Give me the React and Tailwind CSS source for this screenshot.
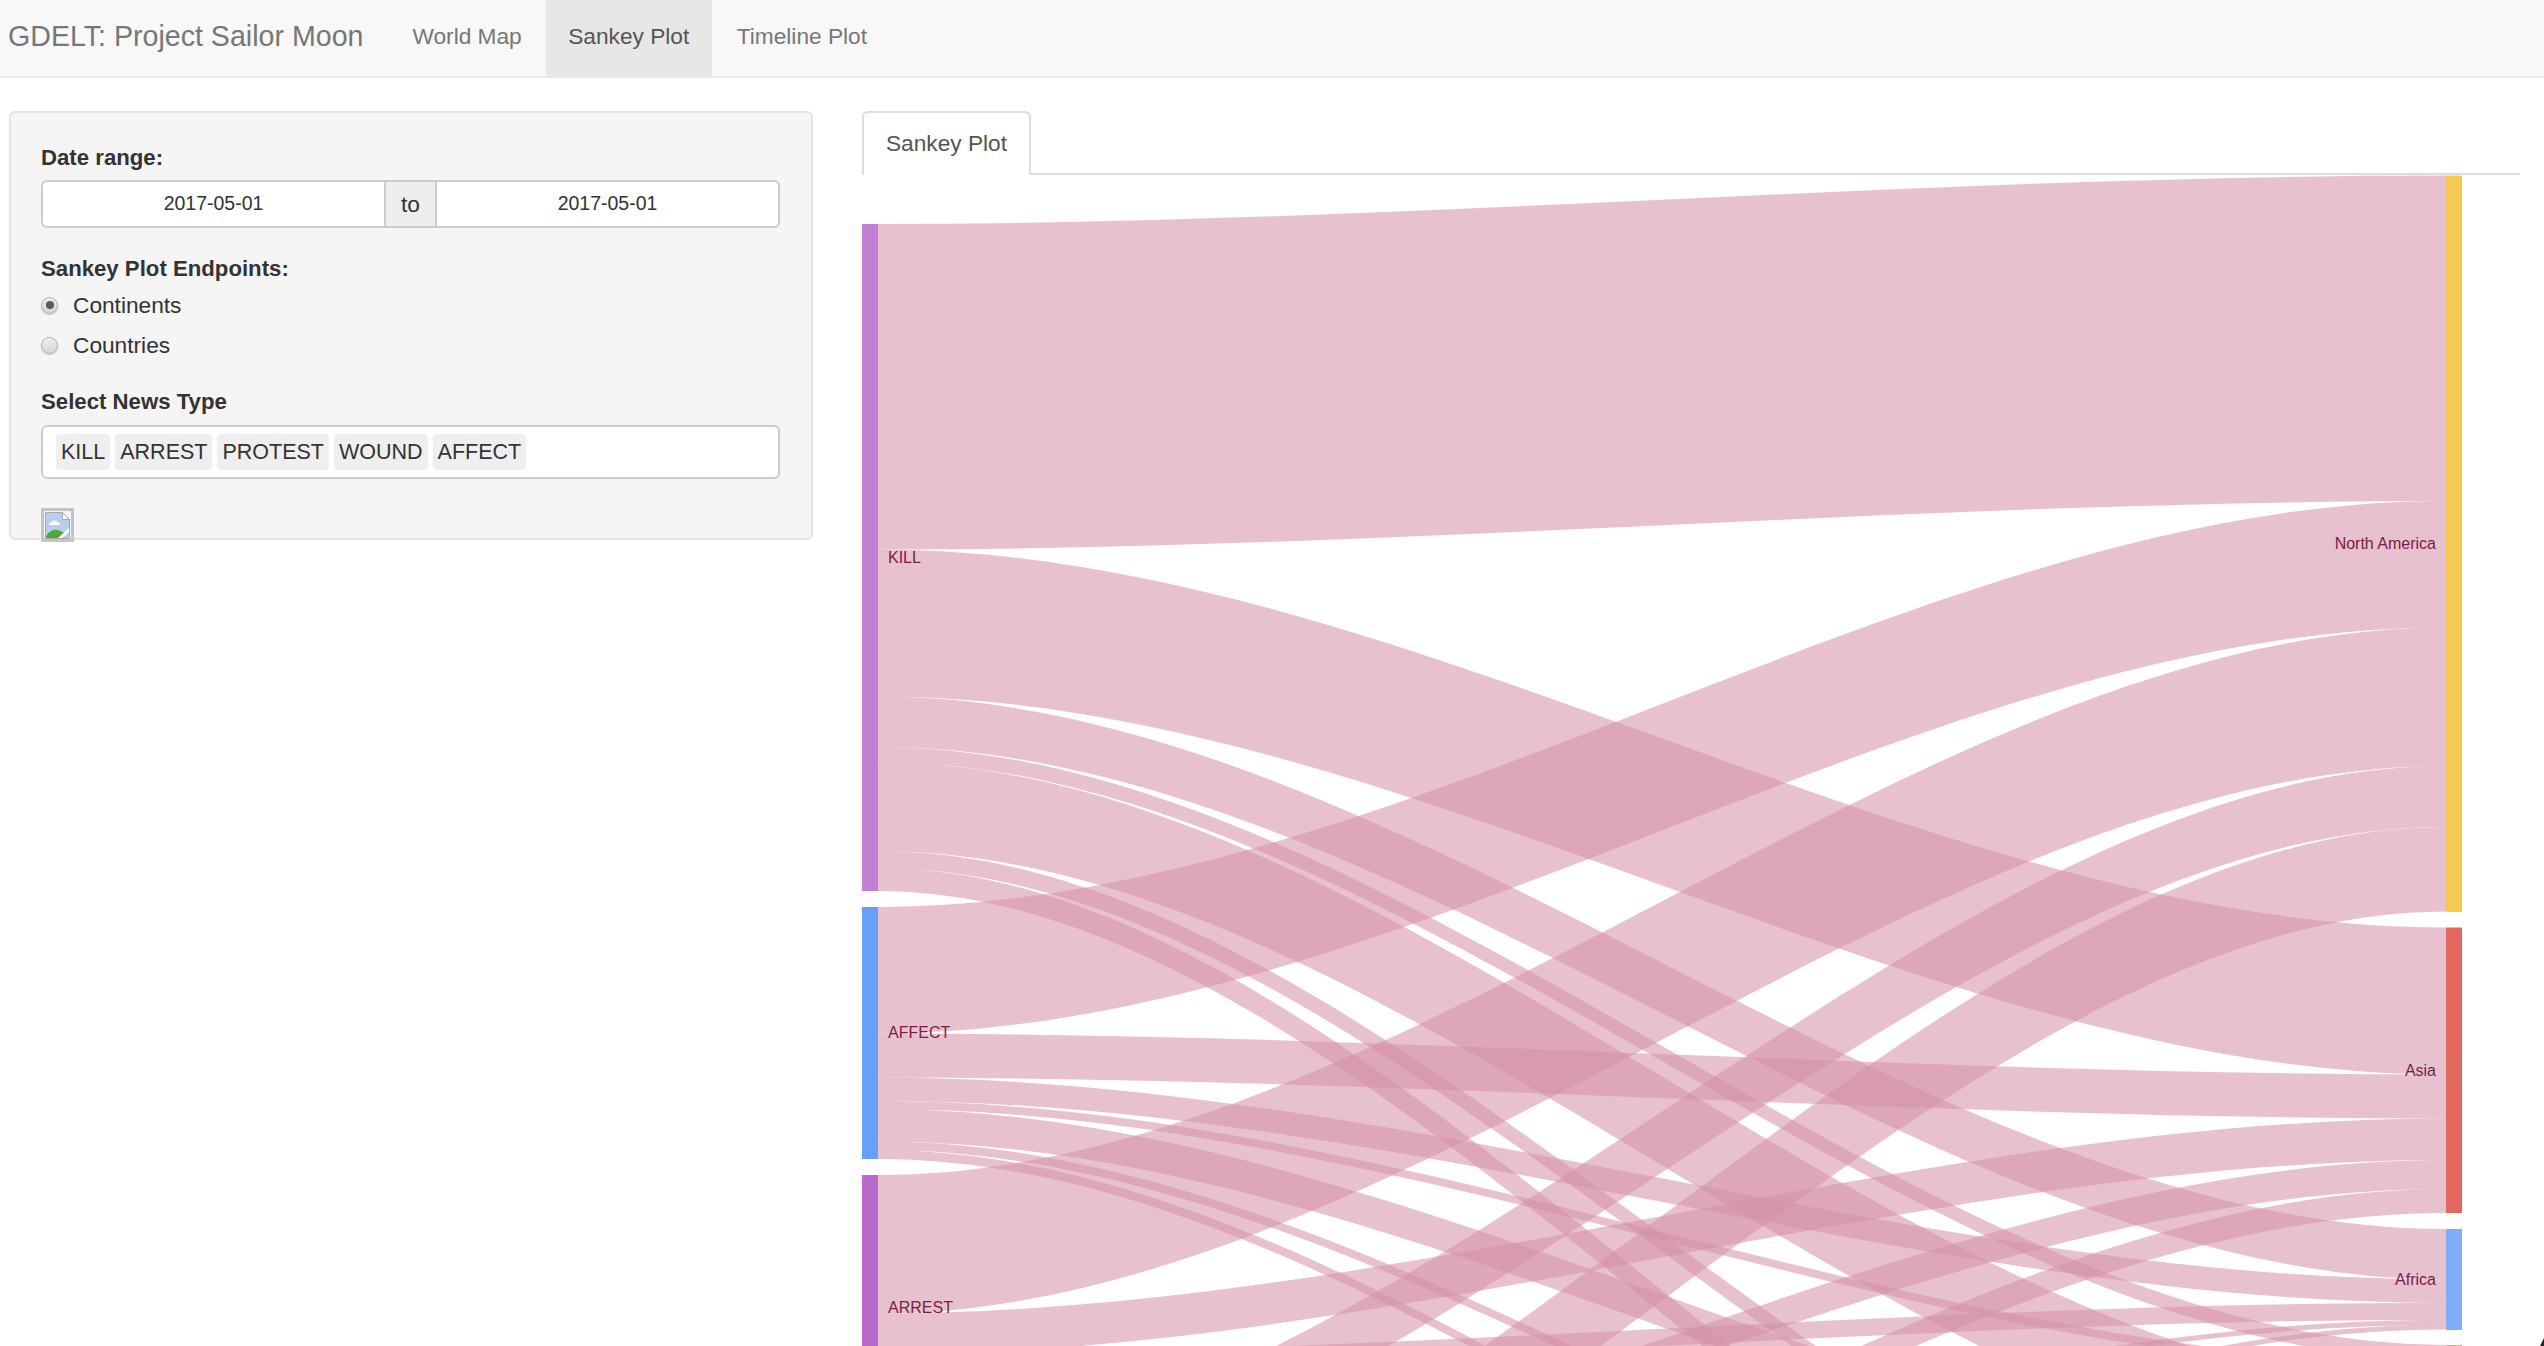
const sourceNodes = [
  { name: 'KILL', y0: 224, y1: 891, color: '#c280d4', labelY: 557 },
  { name: 'AFFECT', y0: 907, y1: 1159, color: '#689ff9', labelY: 1032 },
  { name: 'ARREST', y0: 1175, y1: 1430, color: '#b96bca', labelY: 1307 },
]

const targetNodes = [
  { name: 'North America', y0: 175.5, y1: 912, color: '#f5c952', labelY: 543 },
  { name: 'Asia', y0: 927.5, y1: 1213, color: '#e0685f', labelY: 1070 },
  { name: 'Africa', y0: 1229, y1: 1330, color: '#80acfa', labelY: 1279 },
  { name: '', y0: 1345, y1: 1400, color: '#e8a08f', labelY: 1400 },
]

// [source top, target top, thickness]
const links = [
  // KILL
  [224, 175.5, 325.5],
  [549.5, 927.5, 147],
  [696.5, 1229, 50.5],
  [747, 1345, 15],
  [762, 1391, 89],
  [851, 1618, 17],
  [868, 1713, 23],
  // AFFECT
  [907, 501, 126.5],
  [1033.5, 1074.5, 44],
  [1077.5, 1279.5, 23.4],
  [1101, 1363, 8],
  [1109, 1480, 32.5],
  [1141.5, 1635, 8.5],
  [1150, 1736, 9],
  // ARREST
  [1175, 627.5, 138.5],
  [1313.5, 1118.5, 41.5],
  [1355, 1302.7, 17],
  // the two sources below the fold
  [1457, 766, 61],
  [1518, 1160, 29],
  [1547, 1319.7, 5],
  [1605, 827, 84.5],
  [1689.5, 1189, 24],
  [1713.5, 1324.5, 5],
]

const LEFT_X = 878
const RIGHT_X = 2446

// filled ribbon, same height all along, controls at a third of the span
function linkPath([sy, ty, w]) {
  const c1 = LEFT_X + (RIGHT_X - LEFT_X) / 3
  const c2 = RIGHT_X - (RIGHT_X - LEFT_X) / 3
  return `M${LEFT_X},${sy}C${c1},${sy} ${c2},${ty} ${RIGHT_X},${ty}L${RIGHT_X},${ty + w}C${c2},${ty + w} ${c1},${sy + w} ${LEFT_X},${sy + w}Z`
}

function SankeyChart() {
  return (
    <svg viewBox="862 175 1600 1171" className="block w-[1600px] h-[1171px]">
      <g fill="#d492a9" fillOpacity="0.57">
        {links.map((l, i) => (
          <path key={i} d={linkPath(l)} />
        ))}
      </g>
      {sourceNodes.map((n) => (
        <g key={n.name}>
          <rect x="862" y={n.y0} width="16" height={n.y1 - n.y0} fill={n.color} />
          <text x="888" y={n.labelY + 5.5} fill="#7b1c42" fontSize="16">{n.name}</text>
        </g>
      ))}
      {targetNodes.map((n) => (
        <g key={n.y0}>
          <rect x="2446" y={n.y0} width="16" height={n.y1 - n.y0} fill={n.color} />
          <text x="2436" y={n.labelY + 5.5} fill="#7b1c42" fontSize="16" textAnchor="end">{n.name}</text>
        </g>
      ))}
    </svg>
  )
}

function BrokenImage() {
  return (
    <div className="w-[33px] h-[34px] border-[3px] border-[#c4c4c4] mt-[29px] px-[1px] pt-[1px]">
      <svg viewBox="0 0 25 27" className="block w-full h-full">
        <path d="M0.5 0.5h17l7 7v19h-24z" fill="#b9cdf0" stroke="#a8a8a8" />
        <path d="M17.5 0.5v7h7z" fill="#fff" stroke="#a8a8a8" />
        <path d="M4 13c0-2 2-3 3-3 1-2 4-2 5 0 2 0 3 1 3 3z" fill="#fff" />
        <path d="M1 26c1-5 6-9 11-8 3 .5 5 1.500 7 3l-5 5z" fill="#4fa832" />
        <path d="M13 26l11-10v4l-7 6z" fill="#fff" />
      </svg>
    </div>
  )
}

function Radio({ label, checked }) {
  return (
    <label className="flex items-center h-[26px] mb-[14px] text-[22.7px] text-[#333]">
      <span className="w-[17px] h-[17px] rounded-full border border-[#b0b0b0] bg-gradient-to-b from-[#eeeeee] to-[#d6d6d6] flex items-center justify-center mr-[15px] shadow-[0_1px_1px_#c8c8c8]">
        {checked && <span className="w-2 h-2 rounded-full bg-[#5a5a5a]" />}
      </span>
      {label}
    </label>
  )
}

const newsTypes = ['KILL', 'ARREST', 'PROTEST', 'WOUND', 'AFFECT']

export default function App() {
  return (
    <div className="relative h-screen overflow-hidden bg-white font-['Liberation_Sans',Arial,sans-serif] text-[#333]">
      <nav className="h-[78px] bg-[#f8f8f8] border-b-2 border-[#e7e7e7] flex items-stretch text-[22.7px] text-[#777]">
        <div className="pl-2 pr-[25px] pb-[3px] flex items-center text-[28.6px] whitespace-nowrap">GDELT: Project Sailor Moon</div>
        <a className="px-6 pb-[3px] flex items-center">World Map</a>
        <a className="w-[166px] pb-[3px] flex items-center justify-center bg-[#e7e7e7] text-[#555]">Sankey Plot</a>
        <a className="pl-[25px] pr-6 pb-[3px] flex items-center">Timeline Plot</a>
      </nav>

      <div className="flex pl-[9px] pt-[33px] items-start">
        <aside className="w-[804px] h-[429px] shrink-0 bg-[#f5f5f5] border-2 border-[#e3e3e3] rounded-md pl-[30px] pr-[31px] pt-[30px]">
          <div className="font-bold text-[22.2px] leading-[30px] mb-[7px]">Date range:</div>
          <div className="flex h-[48px] border-2 border-[#ccc] rounded-md text-[19.5px] text-center bg-white overflow-hidden">
            <div className="flex-1 flex items-center justify-center">2017-05-01</div>
            <div className="w-[53px] flex items-center justify-center bg-[#eee] border-x-2 border-[#ccc] text-[22.7px]">to</div>
            <div className="flex-1 flex items-center justify-center">2017-05-01</div>
          </div>

          <div className="font-bold text-[22.2px] leading-[30px] mt-[26px] mb-[8px]">Sankey Plot Endpoints:</div>
          <Radio label="Continents" checked />
          <Radio label="Countries" />

          <div className="font-bold text-[22.2px] leading-[30px] mt-[29px] mb-[8px]">Select News Type</div>
          <div className="h-[54px] border-2 border-[#ccc] rounded-md bg-white flex items-center gap-[5px] pl-[13px] text-[21.5px]">
            {newsTypes.map((t) => (
              <span key={t} className="h-[36px] px-[5px] flex items-center bg-[#efefef] rounded">{t}</span>
            ))}
          </div>
          <BrokenImage />
        </aside>

        <main className="ml-[49px] w-[1658px] shrink-0">
          <div className="h-[64px] border-b-2 border-[#ddd] flex">
            <div className="w-[169px] h-[64px] bg-white border-2 border-b-0 border-[#ddd] rounded-t-md flex items-center justify-center text-[22.7px] text-[#555] pb-[1px]">
              Sankey Plot
            </div>
          </div>
          <SankeyChart />
        </main>
      </div>

      <svg viewBox="0 0 4 8" className="absolute bottom-0 right-0 w-1 h-2">
        <path d="M4 0v8H0z" fill="#222" />
      </svg>
    </div>
  )
}
